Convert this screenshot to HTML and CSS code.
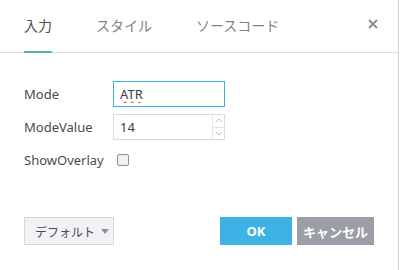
FILE: index.html
```html
<!DOCTYPE html>
<html lang="ja">
<head>
    <meta charset="UTF-8">
    <title>設定</title>
    <link rel="stylesheet" href="styles.css">
</head>
<body>
    <div class="dialog">
        <header class="dialog-header">
            <div class="tabs">
                <span class="tab active">入力</span>
                <span class="tab">スタイル</span>
                <span class="tab">ソースコード</span>
            </div>
            <a href="#" class="close">
                <svg width="10" height="10" viewBox="0 0 10 10">
                    <path d="M1 1 L9 9 M9 1 L1 9" stroke="#8a8d95" stroke-width="2" fill="none"/>
                </svg>
            </a>
        </header>

        <main class="form">
            <label class="label">Mode</label>
            <div class="field">
                <input type="text" class="text-input focused" value="ATR">
            </div>

            <label class="label">ModeValue</label>
            <div class="field number">
                <input type="text" class="text-input" value="14">
                <div class="spinner">
                    <span class="spin up">
                        <svg width="8" height="5" viewBox="0 0 8 5"><path d="M1 4 L4 1 L7 4" stroke="#b9bcc2" fill="none"/></svg>
                    </span>
                    <span class="spin down">
                        <svg width="8" height="5" viewBox="0 0 8 5"><path d="M1 1 L4 4 L7 1" stroke="#b9bcc2" fill="none"/></svg>
                    </span>
                </div>
            </div>

            <label class="label">ShowOverlay</label>
            <div class="field">
                <span class="checkbox"></span>
            </div>
        </main>

        <footer class="dialog-footer">
            <a href="#" class="preset-button">デフォルト <span class="caret"></span></a>
            <div class="actions">
                <a href="#" class="btn btn-ok">OK</a>
                <a href="#" class="btn btn-cancel">キャンセル</a>
            </div>
        </footer>
    </div>
</body>
</html>
```

FILE: styles.css
```css
body {
    margin: 0;
    padding: 0;
    background: #fff;
    font-family: "Noto Sans", "Noto Sans CJK JP", sans-serif;
    color: #4a4b50;
}

.dialog {
    width: 399px;
    height: 270px;
    box-sizing: border-box;
    border-right: 1px solid #d0d2d6;
    display: flex;
    flex-direction: column;
}

.dialog-header {
    display: flex;
    height: 52px;
    border-bottom: 1px solid #dadce0;
    padding: 0 20px 0 24px;
}

.tabs {
    display: flex;
    gap: 44px;
    margin-bottom: -1px;
}

.tab {
    font-family: "Noto Sans CJK JP", sans-serif;
    font-size: 14px;
    line-height: 18px;
    padding-top: 16px;
    color: #7f828b;
    box-sizing: border-box;
    height: 53px;
}

.tab.active {
    color: #4b4e57;
    border-bottom: 2px solid #53b987;
}

.close {
    margin-left: auto;
    margin-top: 19px;
    height: 10px;
    display: flex;
}

.form {
    display: grid;
    grid-template-columns: 89px 112px;
    grid-auto-rows: 26px;
    row-gap: 7px;
    padding: 28px 24px 0;
    align-items: center;
}

.label {
    font-size: 13px;
    color: #4a4b50;
}

.field {
    display: flex;
    height: 100%;
    align-items: center;
}

.text-input {
    width: 100%;
    height: 26px;
    box-sizing: border-box;
    border: 1px solid #d8dade;
    padding: 0 6px;
    font-family: "Noto Sans", sans-serif;
    font-size: 13px;
    color: #3e4046;
    outline: none;
}

.text-input.focused {
    border-color: #3aade3;
    text-decoration: underline wavy #e0302a;
    text-decoration-thickness: 1px;
    text-underline-offset: 2px;
}

.number {
    border: 1px solid #d8dade;
    box-sizing: border-box;
    height: 26px;
}

.number .text-input {
    border: none;
    height: 24px;
}

.spinner {
    width: 12px;
    height: 100%;
    border-left: 1px solid #e3e5e8;
    display: flex;
    flex-direction: column;
}

.spin {
    flex: 1;
    display: flex;
    align-items: center;
    justify-content: center;
}

.spin.up {
    border-bottom: 1px solid #e3e5e8;
}

.checkbox {
    width: 12px;
    height: 12px;
    margin-left: 4px;
    box-sizing: border-box;
    border: 1px solid #8e9096;
    border-radius: 2px;
    background: #eef0f2;
}

.dialog-footer {
    margin-top: auto;
    padding: 0 24px 25px;
    display: flex;
    justify-content: space-between;
}

.preset-button {
    width: 90px;
    height: 28px;
    box-sizing: border-box;
    background: #f1f2f6;
    border: 1px solid #d6d8dc;
    font-family: "Noto Sans CJK JP", sans-serif;
    font-size: 12px;
    white-space: nowrap;
    color: #4a4b50;
    text-decoration: none;
    display: flex;
    align-items: center;
    padding-left: 10px;
    gap: 6px;
}

.caret {
    width: 0;
    height: 0;
    border-left: 4px solid transparent;
    border-right: 4px solid transparent;
    border-top: 5px solid #8e9096;
}

.actions {
    display: flex;
    gap: 5px;
}

.btn {
    height: 28px;
    display: flex;
    align-items: center;
    justify-content: center;
    color: #fff;
    font-weight: bold;
    font-size: 13px;
    white-space: nowrap;
    text-decoration: none;
    font-family: "Noto Sans", "Noto Sans CJK JP", sans-serif;
}

.btn-ok {
    width: 72px;
    background: #3cb3e4;
}

.btn-cancel {
    width: 77px;
    background: #9c9ea5;
}
```
